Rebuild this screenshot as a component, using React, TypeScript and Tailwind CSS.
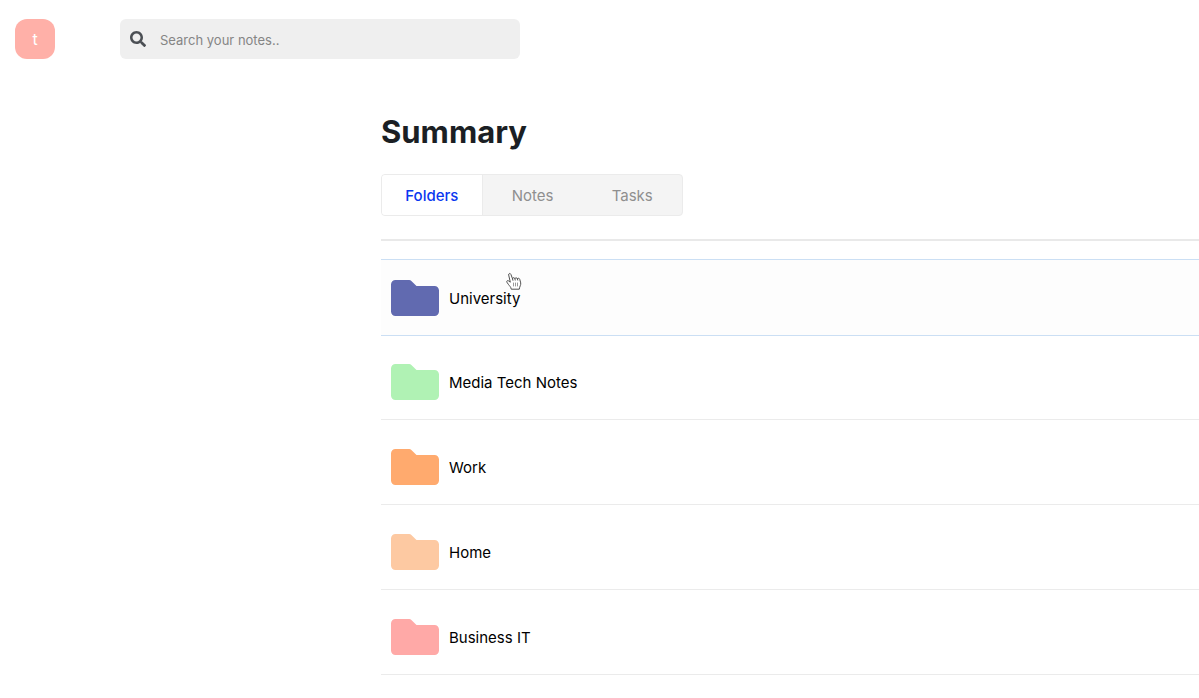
import { useState } from "react";

type Folder = { name: string; color: string };

const folders: Folder[] = [
  { name: "University", color: "text-[#616ab0]" },
  { name: "Media Tech Notes", color: "text-[#b0f2b4]" },
  { name: "Work", color: "text-[#ffaa6e]" },
  { name: "Home", color: "text-[#fdc9a2]" },
  { name: "Business IT", color: "text-[#ffa9a7]" },
];

const tabs = ["Folders", "Notes", "Tasks"];

function FolderIcon({ className }: { className: string }) {
  return (
    <svg viewBox="0 0 512 384" className={"h-9 w-12 " + className} fill="currentColor" aria-hidden="true">
      <path d="M464 64H272L217.400 9.400C211.400 3.400 203.200 0 194.700 0H48C21.500 0 0 21.500 0 48V336C0 362.500 21.500 384 48 384H464C490.500 384 512 362.500 512 336V112C512 85.500 490.500 64 464 64Z" />
    </svg>
  );
}

function SearchIcon() {
  return (
    <svg viewBox="0 0 512 512" className="size-4 text-[#4b4f54]" fill="currentColor" aria-hidden="true">
      <path d="M505 442.700L405.300 343c-4.500-4.500-10.600-7-17-7H372c27.600-35.300 44-79.700 44-128C416 93.100 322.900 0 208 0S0 93.100 0 208s93.100 208 208 208c48.300 0 92.700-16.400 128-44v16.300c0 6.400 2.500 12.500 7 17l99.700 99.700c9.400 9.400 24.600 9.400 33.900 0l28.300-28.300c9.400-9.400 9.400-24.600.1-34zM208 336c-70.700 0-128-57.200-128-128 0-70.700 57.200-128 128-128 70.700 0 128 57.200 128 128 0 70.700-57.200 128-128 128z" />
    </svg>
  );
}

function HandPointer() {
  return (
    <svg
      viewBox="0 0 16 18"
      className="pointer-events-none absolute top-3 left-[125px] h-[18px] w-4"
      fill="#ffffff"
      stroke="#505050"
      strokeWidth="1"
      strokeLinejoin="round"
      strokeLinecap="round"
      aria-hidden="true"
    >
      <path d="M5.200 16.800C4.900 14.900 3.600 14 2.600 12.700L.9 10.200C.3 9.200 1.300 8.200 2.400 8.800L4.300 10.200L2.700 3.100C2.300 1.300 4.300.8 4.900 2.400L6.500 6.700C6.800 5.400 8.400 5.300 8.900 6.600C9.400 5.400 10.900 5.500 11.400 6.800C12.100 5.800 13.500 6.200 13.800 7.500L14.700 10.900C15.100 12.900 13.600 14.400 13.300 16.800Z" />
      <path d="M6.500 6.700L6.900 8.300M8.900 6.600L9.200 8.100M11.400 6.800L11.700 8.100" fill="none" />
      <path d="M7.500 11V14M9.500 11V14M11.500 11V14" fill="none" stroke="#999999" />
    </svg>
  );
}

export default function App() {
  const [active, setActive] = useState("Folders");

  return (
    <div className="min-h-screen overflow-x-hidden bg-white font-['Inter','Liberation_Sans',sans-serif] text-black">
      <header className="flex items-center gap-[65px] px-[15px] pt-[19px]">
        <button type="button" className="size-10 rounded-xl bg-[#ffb0a8] text-base text-white">
          t
        </button>
        <label className="flex h-10 w-[400px] items-center gap-[14px] rounded-md bg-[#efefef] px-[10px]">
          <SearchIcon />
          <input
            type="search"
            aria-label="Search your notes"
            placeholder="Search your notes.."
            className="h-10 min-w-0 flex-1 bg-transparent pt-[2px] text-[13px] outline-none placeholder:text-[#858585]"
          />
        </label>
      </header>

      <main className="ml-[381px] pt-[53px]">
        <h1 className="text-[31px] leading-10 font-bold text-[#1b1f24]">Summary</h1>

        <div role="tablist" className="mt-[22px] flex w-[302px] overflow-hidden rounded border border-[#ebebeb] bg-[#f4f4f4]">
          {tabs.map((tab) => (
            <button
              key={tab}
              type="button"
              role="tab"
              aria-selected={tab === active}
              onClick={() => setActive(tab)}
              className={
                "h-10 flex-1 pt-[2px] text-[15px] " +
                (tab === active ? "border-r border-[#ebebeb] bg-white font-medium text-[#0a37f0]" : "text-[#8f8f8f]")
              }
            >
              {tab}
            </button>
          ))}
        </div>

        <hr className="mt-[23px] border-t-2 border-[#e9e9e9]" />

        <ul className="mt-[18px] flex flex-col gap-2">
          {folders.map((folder, i) => (
            <li
              key={folder.name}
              className={
                "relative border-y " +
                (i === 0 ? "-mb-px border-[#cbdff4] bg-[#fdfdfd]" : "border-t-transparent border-b-[#ebebeb]")
              }
            >
              <a href="#" className="flex h-[75px] items-center gap-[10px] px-[10px] text-[15px]">
                <FolderIcon className={folder.color} />
                <span className="pt-[3px]">{folder.name}</span>
              </a>
              {i === 0 && <HandPointer />}
            </li>
          ))}
        </ul>
      </main>
    </div>
  );
}
